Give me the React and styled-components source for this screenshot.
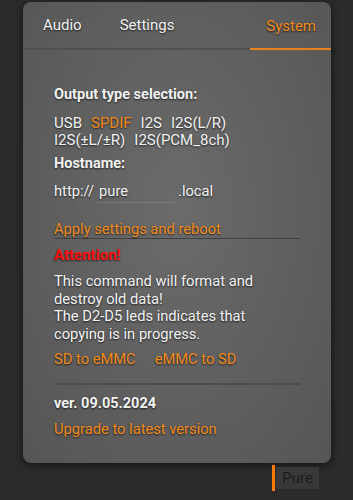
import React from 'react';
import styled, { createGlobalStyle } from 'styled-components';

const Global = createGlobalStyle`
    html, body {
        margin: 0;
        padding: 0;
        background: #2b2b2b;
        font-family: Roboto, "Liberation Sans", sans-serif;
    }
`;

const Page = styled.div`
    width: 353px;
    height: 500px;
    display: flex;
    flex-direction: column;
    align-items: flex-start;
    padding: 2px 0 0 23px;
    box-sizing: border-box;
    overflow: hidden;
`;

const Panel = styled.div`
    width: 308px;
    height: 461px;
    border-radius: 8px;
    background: radial-gradient(ellipse at 50% 45%, #6b6b6b 0%, #5e5e5e 60%, #555 100%);
    box-shadow: 0 2px 8px rgba(0, 0, 0, 0.6);
    display: flex;
    flex-direction: column;
    overflow: hidden;
`;

const Tabs = styled.div`
    display: flex;
    height: 46px;
    border-bottom: 2px solid #505050;
    padding-left: 20px;
    align-items: center;
`;

const Tab = styled.div`
    font-size: 15px;
    color: ${p => (p.active ? '#f08a1c' : '#f0f0f0')};
    text-shadow: 0 1px 2px rgba(0, 0, 0, 0.7);
    margin-right: ${p => p.gap || 0}px;
    height: 100%;
    display: flex;
    align-items: center;
    ${p => p.active && `
        margin-left: auto;
        padding: 0 15px 0 16px;
        box-shadow: inset 0 -2px 0 #e8821c;
        margin-bottom: -2px;
        height: calc(100% + 2px);
    `}
`;

const Body = styled.div`
    padding: 36px 31px 0 31px;
    color: #f2f2f2;
    text-shadow: 0 1px 2px rgba(0, 0, 0, 0.7);
    font-size: 14.7px;
`;

const Heading = styled.div`
    font-weight: bold;
    font-size: 14.5px;
    margin-bottom: ${p => p.mb || 0}px;
`;

const Options = styled.div`
    display: flex;
    flex-wrap: wrap;
    column-gap: 9px;
    line-height: 17px;
    font-size: 15px;
    margin-bottom: 6px;
    width: 200px;
`;

const Option = styled.span`
    color: ${p => (p.active ? '#f08a1c' : '#f2f2f2')};
`;

const HostRow = styled.div`
    display: flex;
    align-items: baseline;
    margin-bottom: 17px;
`;

const HostInput = styled.span`
    box-sizing: border-box;
    width: 79px;
    margin: 0 3px 0 2px;
    padding: 0 0 2px 3px;
    border-bottom: 1px dotted #8a8a8a;
`;

const Action = styled.div`
    color: #f08a1c;
    font-size: 14.7px;
`;

const ApplyRow = styled.div`
    border-bottom: 1px solid #404040;
    margin-bottom: 7px;
`;

const Warning = styled.div`
    color: #ff1010;
    font-weight: bold;
    font-size: 15px;
    margin-bottom: 9px;
`;

const Para = styled.p`
    margin: 0 0 7px;
    font-size: 14.7px;
    line-height: 17.5px;
`;

const CopyRow = styled.div`
    display: flex;
    gap: 19px;
    padding-bottom: 15px;
    border-bottom: 2px solid #4d4d4d;
    margin-bottom: 10px;
`;

const Footer = styled.div`
    display: flex;
    justify-content: flex-end;
    width: 308px;
    padding-top: 2px;
`;

const Badge = styled.div`
    margin-right: 12px;
    border-left: 3px solid #ff7a00;
    display: flex;
    align-items: center;
    height: 26px;
`;

const BadgeLabel = styled.div`
    background: #383838;
    color: #1c1c1c;
    font-size: 15px;
    padding: 0 6px;
    height: 22px;
    display: flex;
    align-items: center;
    margin-left: 1px;
`;

export default function App() {
    return (
        <Page>
            <Global />
            <Panel>
                <Tabs>
                    <Tab gap={38}>Audio</Tab>
                    <Tab>Settings</Tab>
                    <Tab active>System</Tab>
                </Tabs>
                <Body>
                    <Heading mb={12}>Output type selection:</Heading>
                    <Options>
                        <Option>USB</Option>
                        <Option active>SPDIF</Option>
                        <Option>I2S</Option>
                        <Option>I2S(L/R)</Option>
                        <Option>I2S(±L/±R)</Option>
                        <Option>I2S(PCM_8ch)</Option>
                    </Options>
                    <Heading mb={10}>Hostname:</Heading>
                    <HostRow>
                        http://<HostInput>pure</HostInput>.local
                    </HostRow>
                    <ApplyRow>
                        <Action>Apply settings and reboot</Action>
                    </ApplyRow>
                    <Warning>Attention!</Warning>
                    <Para>
                        This command will format and<br />
                        destroy old data!<br />
                        The D2-D5 leds indicates that<br />
                        copying is in progress.
                    </Para>
                    <CopyRow>
                        <Action>SD to eMMC</Action>
                        <Action>eMMC to SD</Action>
                    </CopyRow>
                    <Heading mb={8}>ver. 09.05.2024</Heading>
                    <Action>Upgrade to latest version</Action>
                </Body>
            </Panel>
            <Footer>
                <Badge>
                    <BadgeLabel>Pure</BadgeLabel>
                </Badge>
            </Footer>
        </Page>
    );
}
